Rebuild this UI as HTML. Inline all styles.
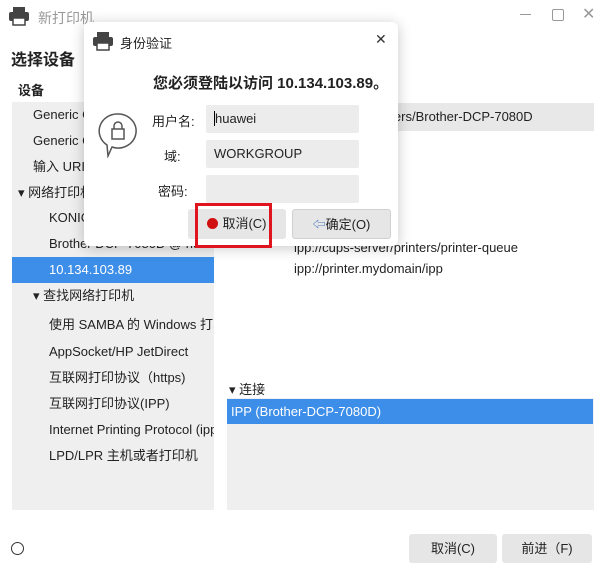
<!DOCTYPE html>
<html><head><meta charset="utf-8"><style>
*{margin:0;padding:0;box-sizing:border-box}
body{width:606px;height:575px;background:#fff;font-family:"Liberation Sans","Noto Sans CJK SC",sans-serif;font-size:13px;color:#222;position:relative;overflow:hidden}
.a{position:absolute;white-space:nowrap}
.left{position:absolute;left:12px;top:80px;width:202px;height:430px;background:#efefef;overflow:hidden}
.left .r{position:absolute;left:0;width:202px;height:26px;line-height:26px;white-space:nowrap;overflow:hidden}
.sel{background:#3d8ee8;color:#fff}
.btn{position:absolute;background:#e6e6e6;border-radius:3px;text-align:center;line-height:29px;white-space:nowrap}
.fld{position:absolute;background:#ececec;border-radius:2px;left:206px;width:153px;height:28px;line-height:28px;padding-left:8px}
</style></head><body>
<svg class="a" style="left:8px;top:6px" width="22" height="20" viewBox="0 0 22 20"><rect x="5" y="1" width="12" height="5" fill="#444"/><rect x="1" y="6" width="20" height="9" rx="2" fill="#444"/><rect x="5" y="12" width="12" height="7" fill="#fff" stroke="#444" stroke-width="1.5"/></svg>
<div class="a" style="left:38px;top:8px;color:#999;font-size:14px">新打印机</div>
<div class="a" style="left:520px;top:14px;width:11px;height:1px;background:#999"></div>
<div class="a" style="left:552px;top:9px;width:12px;height:12px;border:1px solid #999;border-radius:2px"></div>
<div class="a" style="left:582px;top:4px;color:#999;font-size:16px">✕</div>
<div class="a" style="left:11px;top:46px;font-size:16px;font-weight:bold">选择设备</div>
<div class="left">
<div class="r" style="top:0;background:#fff;font-weight:bold;padding-left:6px;height:22px;line-height:22px">设备</div>
<div class="r" style="top:22px;padding-left:21px">Generic CUPS-PDF</div>
<div class="r" style="top:48px;padding-left:21px">Generic CUPS-BRF</div>
<div class="r" style="top:74px;padding-left:21px">输入 URI</div>
<div class="r" style="top:100px;padding-left:6px">▾ 网络打印机</div>
<div class="r" style="top:125px;padding-left:37px">KONICA</div>
<div class="r" style="top:151px;padding-left:37px">Brother DCP-7080D @ hua</div>
<div class="r sel" style="top:177px;padding-left:37px">10.134.103.89</div>
<div class="r" style="top:203px;padding-left:21px">▾ 查找网络打印机</div>
<div class="r" style="top:232px;padding-left:37px">使用 SAMBA 的 Windows 打印机</div>
<div class="r" style="top:259px;padding-left:37px">AppSocket/HP JetDirect</div>
<div class="r" style="top:285px;padding-left:37px">互联网打印协议（https)</div>
<div class="r" style="top:311px;padding-left:37px">互联网打印协议(IPP)</div>
<div class="r" style="top:337px;padding-left:37px">Internet Printing Protocol (ipp)</div>
<div class="r" style="top:363px;padding-left:37px">LPD/LPR 主机或者打印机</div>
</div>
<div class="a" style="left:227px;top:103px;width:367px;height:28px;background:#e8e8e8"></div>
<div class="a" style="left:300px;top:103px;line-height:28px">ipp://printer/printers/Brother-DCP-7080D</div>
<div class="a" style="left:294px;top:240px">ipp://cups-server/printers/printer-queue</div>
<div class="a" style="left:294px;top:261px">ipp://printer.mydomain/ipp</div>
<div class="a" style="left:229px;top:379px">▾ 连接</div>
<div class="a" style="left:227px;top:398px;width:367px;height:112px;background:#efefef"></div>
<div class="a sel" style="left:227px;top:399px;width:366px;height:25px;line-height:25px;padding-left:4px">IPP (Brother-DCP-7080D)</div>
<div class="a" style="left:11px;top:542px;width:13px;height:13px;border:1.5px solid #333;border-radius:50%"></div>
<div class="btn" style="left:409px;top:534px;width:88px">取消(C)</div>
<div class="btn" style="left:502px;top:534px;width:90px">前进（F)</div>
<div class="a" style="left:84px;top:22px;width:314px;height:224px;background:#fff;border-radius:6px;box-shadow:0 2px 14px rgba(0,0,0,.22)"></div>
<svg class="a" style="left:92px;top:31px" width="22" height="20" viewBox="0 0 22 20"><rect x="5" y="1" width="12" height="5" fill="#444"/><rect x="1" y="6" width="20" height="9" rx="2" fill="#444"/><rect x="5" y="12" width="12" height="7" fill="#fff" stroke="#444" stroke-width="1.5"/></svg>
<div class="a" style="left:120px;top:33px">身份验证</div>
<div class="a" style="left:375px;top:31px;font-size:14px;color:#333">✕</div>
<div class="a" style="left:153px;top:72px;font-size:15px;font-weight:bold">您必须登陆以访问 10.134.103.89。</div>
<svg class="a" style="left:98px;top:112px" width="40" height="46" viewBox="0 0 40 46"><path d="M20 2a18 17 0 1 1-6 33l-4 9-1-11A18 17 0 0 1 20 2z" fill="none" stroke="#555" stroke-width="1.5"/><rect x="14" y="17" width="12" height="10" fill="none" stroke="#555" stroke-width="1.5"/><path d="M16 17v-3a4 4 0 0 1 8 0v3" fill="none" stroke="#555" stroke-width="1.5"/></svg>
<div class="a" style="left:152px;top:111px">用户名:</div>
<div class="a" style="left:164px;top:146px">域:</div>
<div class="a" style="left:158px;top:181px">密码:</div>
<div class="fld" style="top:105px"><span style="border-left:1px solid #000">huawei</span></div>
<div class="fld" style="top:140px">WORKGROUP</div>
<div class="fld" style="top:175px"></div>
<div class="btn" style="left:188px;top:209px;width:98px;height:30px"><span style="display:inline-block;width:11px;height:11px;border-radius:50%;background:#d01010;vertical-align:-1px;margin-right:4px"></span>取消(C)</div>
<div class="btn" style="left:292px;top:209px;width:99px;height:30px;border:1px solid #d0d0d0"><span style="color:#4a7cc0">⇦</span>确定(O)</div>
<div class="a" style="left:195px;top:203px;width:77px;height:45px;border:3px solid #e0141e"></div>
</body></html>
